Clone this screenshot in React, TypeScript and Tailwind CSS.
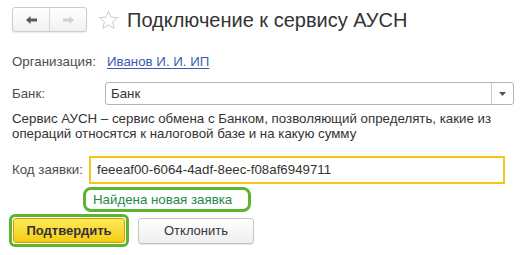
import React from 'react';

const App: React.FC = () => {
  return (
    <div className="w-[525px] h-[255px] bg-white overflow-hidden font-['Liberation_Sans',Arial,sans-serif] text-[13.3px] text-[#4d4d4d]">
      {/* Header */}
      <div className="flex items-center pt-[7px] pl-[12px]">
        <div className="flex h-[25px] border border-[#cccccc] rounded-[3px] bg-gradient-to-b from-white to-[#f1f1f1] shadow-[0_1px_1px_rgba(0,0,0,0.08)]">
          <div className="w-[37px] flex items-center justify-center border-r border-[#d6d6d6]">
            <svg width="11" height="8" viewBox="0 0 11 8">
              <path d="M0 4 L4.5 0 L4.5 2.6 L11 2.6 L11 5.4 L4.5 5.4 L4.5 8 Z" fill="#5a5a5a" />
            </svg>
          </div>
          <div className="w-[36px] flex items-center justify-center">
            <svg width="11" height="8" viewBox="0 0 11 8">
              <path d="M11 4 L6.5 0 L6.5 2.6 L0 2.6 L0 5.4 L6.5 5.4 L6.5 8 Z" fill="#d0d0d0" />
            </svg>
          </div>
        </div>
        <svg className="ml-[11px]" width="21" height="20" viewBox="0 0 24 23">
          <path
            d="M12 1.2 L14.9 8.2 L22.5 8.8 L16.7 13.7 L18.5 21.2 L12 17.2 L5.5 21.2 L7.3 13.7 L1.5 8.8 L9.1 8.2 Z"
            fill="none"
            stroke="#c4c4c4"
            strokeWidth="1"
            strokeLinejoin="round"
          />
        </svg>
        <h1 className="ml-[8px] text-[20px] leading-[24px] text-[#333333] font-normal">
          Подключение к сервису АУСН
        </h1>
      </div>

      <div className="pl-[12px]">
        {/* Организация */}
        <div className="flex items-center h-[18px] mt-[21px]">
          <span className="w-[95px]">Организация:</span>
          <a className="text-[#3a5cb0] underline underline-offset-2 decoration-[#3a5cb0]" href="#">
            Иванов И. И. ИП
          </a>
        </div>

        {/* Банк */}
        <div className="flex items-center mt-[11px]">
          <span className="w-[93px]">Банк:</span>
          <div className="flex w-[409px] h-[23px] border border-[#b4b4b4] rounded-[3px] bg-white">
            <span className="flex-1 flex items-center pl-[5px] text-[#333333]">Банк</span>
            <div className="w-[22px] flex items-center justify-center border-l border-[#c8c8c8]">
              <svg width="7" height="4" viewBox="0 0 7 4">
                <path d="M0 0 L7 0 L3.5 4 Z" fill="#555555" />
              </svg>
            </div>
          </div>
        </div>

        {/* Описание */}
        <p className="mt-[6px] w-[500px] leading-[15px] text-[#333333]">
          Сервис АУСН – сервис обмена с Банком, позволяющий определять, какие из операций относятся к налоговой базе и на какую сумму
        </p>

        {/* Код заявки */}
        <div className="flex items-center mt-[15px]">
          <span className="w-[77px]">Код заявки:</span>
          <div className="flex items-center w-[416px] h-[28px] border-2 border-[#f5c518] bg-white pl-[6px] text-[#333333]">
            feeeaf00-6064-4adf-8eec-f08af6949711
          </div>
        </div>

        {/* Найдена новая заявка */}
        <div className="ml-[71px] mt-[3px] flex items-center w-[168px] h-[25px] border-[3px] border-[#5cb531] rounded-[8px] pl-[7px] text-[#23894a]">
          Найдена новая заявка
        </div>

        {/* Buttons */}
        <div className="flex items-center -ml-[3px] mt-[2px]">
          <div className="p-[1px] border-[3px] border-[#5cb531] rounded-[6px]">
            <button className="w-[112px] h-[25px] border border-[#c9a400] rounded-[3px] bg-gradient-to-b from-[#ffea55] to-[#f4cd00] text-[13px] font-bold text-[#333333]">
              Подтвердить
            </button>
          </div>
          <button className="ml-[9px] w-[116px] h-[26px] border border-[#c4c4c4] rounded-[3px] bg-gradient-to-b from-white to-[#eeeeee] text-[13px] text-[#333333] shadow-[0_1px_1px_rgba(0,0,0,0.1)]">
            Отклонить
          </button>
        </div>
      </div>
    </div>
  );
};

export default App;
